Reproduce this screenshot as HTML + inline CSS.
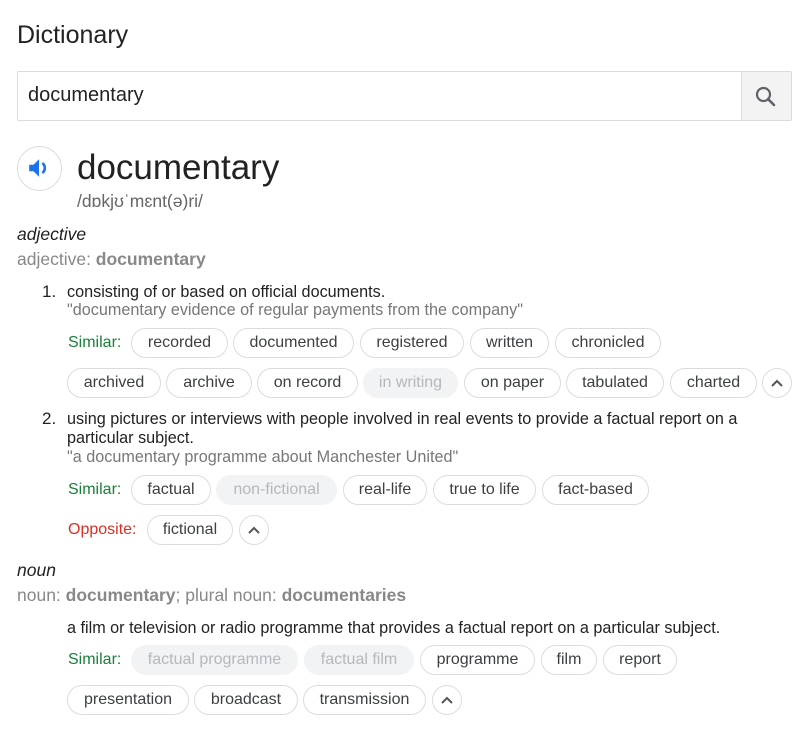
<!DOCTYPE html>
<html><head><meta charset="utf-8"><style>
body{margin:0;width:805px;height:740px;background:#fff;font-family:"Liberation Sans",Arial,sans-serif;color:#222;position:relative;overflow:hidden}
.a{position:absolute;white-space:nowrap}
.c{position:absolute;height:28px;border:1px solid #dadce0;border-radius:15px;display:flex;align-items:center;justify-content:center;font-size:16px;color:#3c4043;box-sizing:content-box}
.g{border-color:#f1f3f4;background:#f1f3f4;color:#b5b8bc}
.u{width:28px;border-radius:50%}
.t{font-size:16.2px;color:#222}
.q{font-size:16.2px;color:#777}
.sim{font-size:16px;color:#188038}
</style></head><body>
<div class="a" style="left:17px;top:21px;font-size:25px;color:#222">Dictionary</div>
<div class="a" style="left:17px;top:71px;width:773px;height:48px;border:1px solid #dadce0;border-radius:2px"></div>
<div class="a" style="left:28px;top:84px;font-size:20px;color:#222">documentary</div>
<div class="a" style="left:741px;top:72px;width:49px;height:48px;background:#f3f3f3;border-left:1px solid #dadce0"></div>
<svg class="a" style="left:753px;top:84px" width="26" height="26" viewBox="0 0 26 26"><circle cx="10.5" cy="10.5" r="6.5" fill="none" stroke="#5f6368" stroke-width="2.2"/><path d="M15 15l6 6" stroke="#5f6368" stroke-width="2.6" stroke-linecap="round"/></svg>
<div class="a" style="left:17px;top:146px;width:43px;height:43px;border:1px solid #dadce0;border-radius:50%"></div>
<svg class="a" style="left:27px;top:156px" width="24" height="24" viewBox="0 0 22 22"><path d="M2 8h4l5-5v16l-5-5H2z" fill="#1a73e8"/><path d="M14 6.5a5.5 5.5 0 0 1 0 9" fill="none" stroke="#1a73e8" stroke-width="2.4"/></svg>
<div class="a" style="left:77px;top:148px;font-size:35px;color:#222">documentary</div>
<div class="a" style="left:77px;top:191px;font-size:17.5px;color:#666">/dɒkjʊˈmɛnt(ə)ri/</div>
<div class="a" style="left:17px;top:224px;font-size:17.5px;font-style:italic;color:#222">adjective</div>
<div class="a" style="left:17px;top:249px;font-size:17.5px;color:#888">adjective: <b>documentary</b></div>
<div class="a" style="left:42px;top:282px;font-size:17px;color:#222">1.</div>
<div class="a t" style="left:67px;top:283px">consisting of or based on official documents.</div>
<div class="a q" style="left:67px;top:301px">"documentary evidence of regular payments from the company"</div>
<div class="a sim" style="left:68px;top:334px">Similar:</div>
<div class="c" style="left:131px;top:328px;width:95px">recorded</div>
<div class="c" style="left:233px;top:328px;width:119px">documented</div>
<div class="c" style="left:360px;top:328px;width:102px">registered</div>
<div class="c" style="left:470px;top:328px;width:77px">written</div>
<div class="c" style="left:555px;top:328px;width:104px">chronicled</div>
<div class="c" style="left:67px;top:368px;width:92px">archived</div>
<div class="c" style="left:166px;top:368px;width:84px">archive</div>
<div class="c" style="left:257px;top:368px;width:99px">on record</div>
<div class="c g" style="left:363px;top:368px;width:93px">in writing</div>
<div class="c" style="left:464px;top:368px;width:95px">on paper</div>
<div class="c" style="left:566px;top:368px;width:96px">tabulated</div>
<div class="c" style="left:670px;top:368px;width:85px">charted</div>
<div class="c u" style="left:762px;top:368px"><svg width="14" height="10" viewBox="0 0 14 10"><path d="M2 8l5-5 5 5" fill="none" stroke="#555" stroke-width="2"/></svg></div>
<div class="a" style="left:42px;top:409px;font-size:17px;color:#222">2.</div>
<div class="a t" style="left:67px;top:410px;line-height:19px">using pictures or interviews with people involved in real events to provide a factual report on a<br>particular subject.</div>
<div class="a q" style="left:67px;top:448px">"a documentary programme about Manchester United"</div>
<div class="a sim" style="left:68px;top:481px">Similar:</div>
<div class="c" style="left:131px;top:475px;width:78px">factual</div>
<div class="c g" style="left:216px;top:475px;width:119px">non-fictional</div>
<div class="c" style="left:343px;top:475px;width:82px">real-life</div>
<div class="c" style="left:433px;top:475px;width:101px">true to life</div>
<div class="c" style="left:542px;top:475px;width:105px">fact-based</div>
<div class="a" style="left:68px;top:521px;font-size:16px;color:#d93025">Opposite:</div>
<div class="c" style="left:147px;top:515px;width:84px">fictional</div>
<div class="c u" style="left:239px;top:515px"><svg width="14" height="10" viewBox="0 0 14 10"><path d="M2 8l5-5 5 5" fill="none" stroke="#555" stroke-width="2"/></svg></div>
<div class="a" style="left:17px;top:560px;font-size:17.5px;font-style:italic;color:#222">noun</div>
<div class="a" style="left:17px;top:585px;font-size:17.5px;color:#888">noun: <b>documentary</b>; plural noun: <b>documentaries</b></div>
<div class="a t" style="left:67px;top:619px">a film or television or radio programme that provides a factual report on a particular subject.</div>
<div class="a sim" style="left:68px;top:651px">Similar:</div>
<div class="c g" style="left:131px;top:645px;width:165px">factual programme</div>
<div class="c g" style="left:304px;top:645px;width:108px">factual film</div>
<div class="c" style="left:420px;top:645px;width:113px">programme</div>
<div class="c" style="left:541px;top:645px;width:54px">film</div>
<div class="c" style="left:603px;top:645px;width:72px">report</div>
<div class="c" style="left:67px;top:685px;width:120px">presentation</div>
<div class="c" style="left:194px;top:685px;width:102px">broadcast</div>
<div class="c" style="left:303px;top:685px;width:121px">transmission</div>
<div class="c u" style="left:432px;top:685px"><svg width="14" height="10" viewBox="0 0 14 10"><path d="M2 8l5-5 5 5" fill="none" stroke="#555" stroke-width="2"/></svg></div>
</body></html>
